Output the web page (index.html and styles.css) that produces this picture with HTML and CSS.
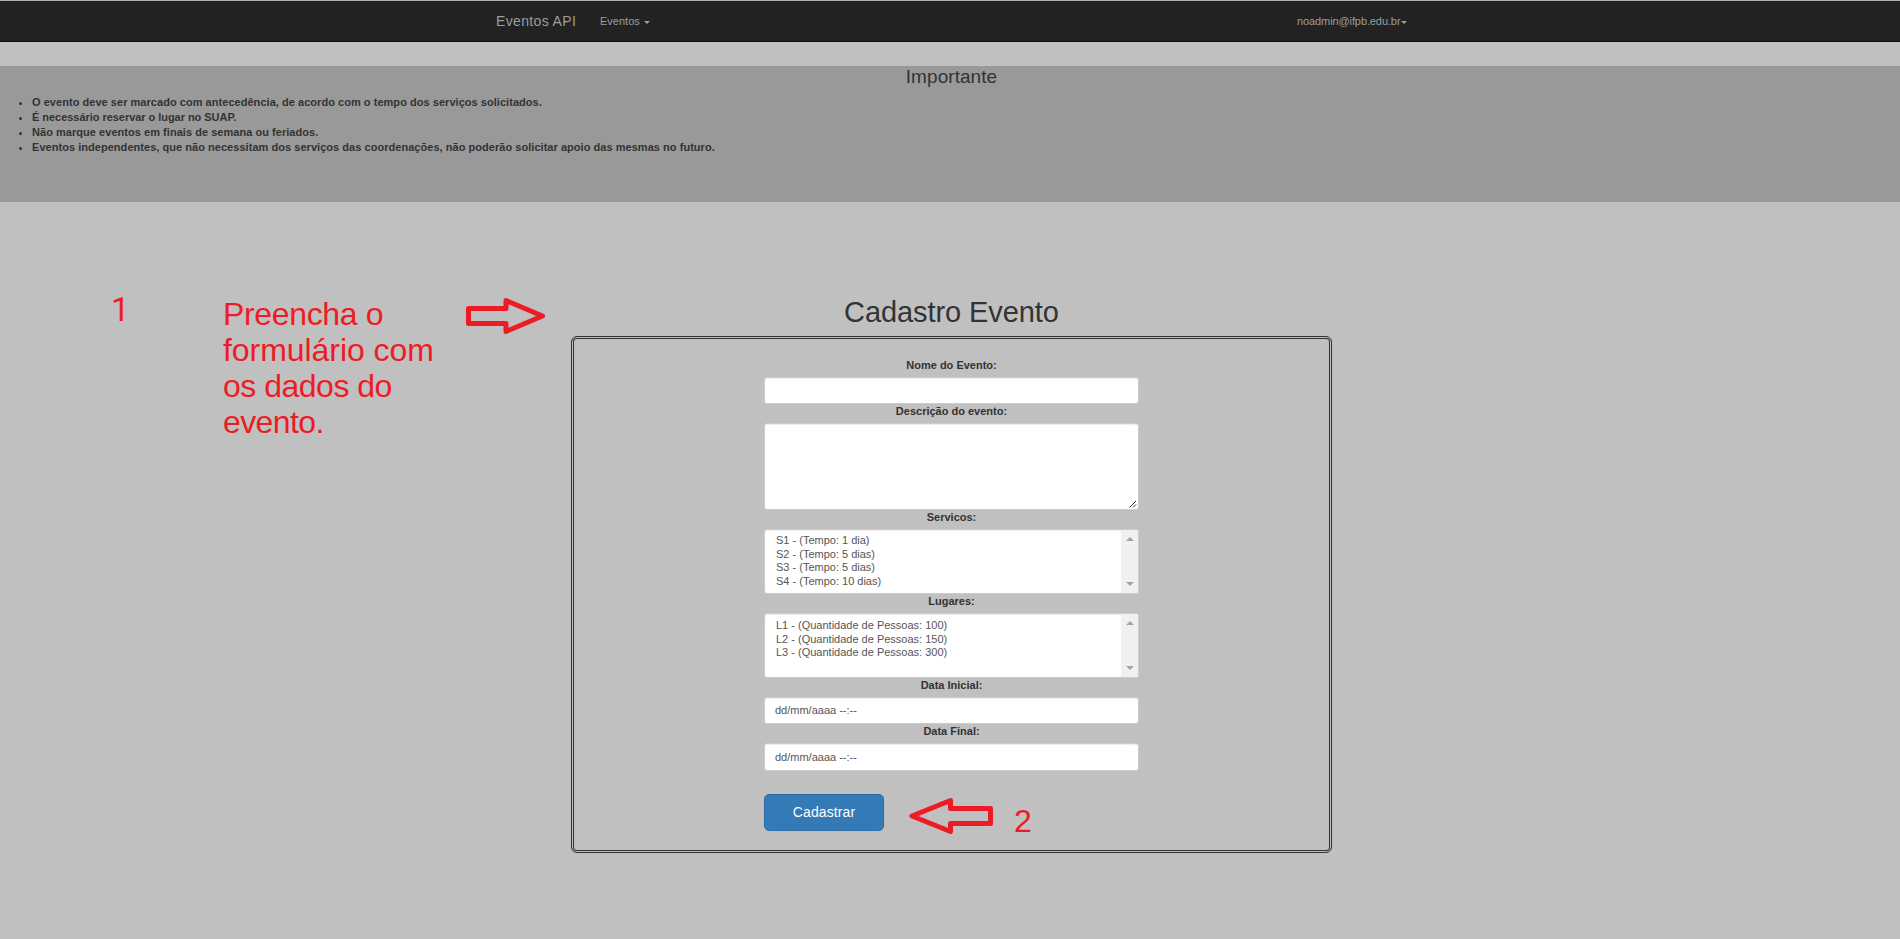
FILE: index.html
```html
<!DOCTYPE html>
<html lang="pt-BR">
<head>
<meta charset="utf-8">
<title>Eventos API</title>
<link rel="stylesheet" href="styles.css">
</head>
<body>
<nav class="navbar">
  <div class="navbar-inner">
    <a class="brand">Eventos API</a>
    <a class="nav-link">Eventos <span class="caret caret-gap"></span></a>
    <a class="nav-user"><span class="user-name">noadmin@ifpb.edu.br</span><span class="caret"></span></a>
  </div>
</nav>
<section class="notice">
  <h4 class="notice-title"><span>Importante</span></h4>
  <ul class="notice-list">
    <li><span class="n1">O evento deve ser marcado com antecedência, de acordo com o tempo dos serviços solicitados.</span></li>
    <li><span class="n2">É necessário reservar o lugar no SUAP.</span></li>
    <li><span class="n3">Não marque eventos em finais de semana ou feriados.</span></li>
    <li><span class="n4">Eventos independentes, que não necessitam dos serviços das coordenações, não poderão solicitar apoio das mesmas no futuro.</span></li>
  </ul>
</section>
<main class="content">
  <h2 class="title"><span>Cadastro Evento</span></h2>
  <form class="panel">
    <label class="label">Nome do Evento:</label>
    <input class="control" type="text">
    <label class="label">Descrição do evento:</label>
    <div class="area-wrap">
      <textarea class="control area"></textarea>
      <svg class="grip" width="8" height="8" viewBox="0 0 8 8"><path d="M0.5 7.5L7 1M4 7.5L7 4.5" stroke="#333" stroke-width="1" fill="none"/></svg>
    </div>
    <label class="label">Servicos:</label>
    <div class="control list">
      <ul class="options">
        <li>S1 - (Tempo: 1 dia)</li>
        <li>S2 - (Tempo: 5 dias)</li>
        <li>S3 - (Tempo: 5 dias)</li>
        <li>S4 - (Tempo: 10 dias)</li>
      </ul>
      <div class="scroll"><span class="up"></span><span class="down"></span></div>
    </div>
    <label class="label">Lugares:</label>
    <div class="control list">
      <ul class="options options-low">
        <li>L1 - (Quantidade de Pessoas: 100)</li>
        <li>L2 - (Quantidade de Pessoas: 150)</li>
        <li>L3 - (Quantidade de Pessoas: 300)</li>
      </ul>
      <div class="scroll"><span class="up"></span><span class="down"></span></div>
    </div>
    <label class="label">Data Inicial:</label>
    <div class="control date"><span>dd/mm/aaaa --:--</span></div>
    <label class="label">Data Final:</label>
    <div class="control date date-last"><span>dd/mm/aaaa --:--</span></div>
    <button class="submit" type="button">Cadastrar</button>
  </form>
</main>
<div class="note note-one">1</div>
<div class="note note-fill"><span class="f1">Preencha o</span><br><span class="f2">formulário com</span><br><span class="f3">os dados do</span><br><span class="f4">evento.</span></div>
<svg class="arrow arrow-right" width="82" height="40" viewBox="0 0 82 40"><path d="M3.500 11.500H41V3.500L77.500 19L41 34.500V26.500H3.500Z"/></svg>
<svg class="arrow arrow-left" width="88" height="40" viewBox="0 0 88 40"><path d="M83.500 11.500H43.500V3.500L5 19L43.500 34.500V26.500H83.500Z"/></svg>
<div class="note note-two">2</div>
</body>
</html>
```
FILE: styles.css
```css
* { box-sizing: border-box; }
body {
  margin: 0;
  height: 939px;
  overflow: hidden;
  position: relative;
  background: #c0c0c0;
  color: #333;
  font: 11px/15px "Liberation Sans", Arial, sans-serif;
}
.navbar {
  height: 42px;
  margin-bottom: 24px;
  background: #222;
  border-top: 1px solid #a9adab;
  border-bottom: 1px solid #080808;
}
.navbar-inner { display: flex; align-items: center; height: 40px; padding-left: 496px; color: #9d9d9d; }
.brand { font-size: 14px; width: 104px; letter-spacing: 0.35px; }
.nav-link { width: 697px; }
.nav-user { display: flex; align-items: center; letter-spacing: -0.1px; }
.caret {
  display: inline-block;
  border-top: 3px solid #9d9d9d;
  border-left: 3px solid transparent;
  border-right: 3px solid transparent;
  vertical-align: middle;
  margin: 2px 0 0 1px;
}
.caret-gap { margin: 1px 0 0 1px; }
.notice { height: 136px; background: #999; }
.notice-title { margin: 0; padding: 1px 0 0 3px; font-size: 19px; line-height: 20px; font-weight: 400; text-align: center; letter-spacing: 0.06px; }
.notice-list { margin: 8px 0 0; padding-left: 32px; font-weight: 700; font-size: 11px; letter-spacing: 0.04px; }
.n2 { letter-spacing: -0.04px; }
.content { padding-top: 93px; }
.title { margin: 0; height: 41px; font-size: 29px; line-height: 34px; font-weight: 400; text-align: center; padding-left: 3px; letter-spacing: -0.08px; }
.panel {
  display: flex;
  flex-direction: column;
  width: 761px;
  height: 517px;
  margin: 0 0 0 571px;
  padding: 21px 192px 0;
  border: 1px solid #333;
  border-radius: 6px;
  box-shadow: inset 0 0 0 1px #c0c0c0, inset 0 0 0 2px #333;
}
.label { width: 375px; height: 19px; font-weight: 700; text-align: center; flex: none; }
.control {
  display: block;
  width: 375px;
  height: 27px;
  flex: none;
  border: 1px solid #ccc;
  border-radius: 3px;
  background: #fff;
  color: #555;
  font: 11px/15px "Liberation Sans", Arial, sans-serif;
  box-shadow: inset 0 1px 1px rgba(0,0,0,.075);
}
.area-wrap { position: relative; height: 87px; width: 375px; }
.area { height: 87px; resize: none; }
.grip { position: absolute; right: 2px; bottom: 2px; }
.list { height: 65px; display: flex; justify-content: space-between; overflow: hidden; }
.options { list-style: none; margin: 0; padding: 4px 0 0 11px; line-height: 13.6px; }
.options-low { padding-top: 5px; }
.scroll { width: 17px; background: #f0f0f0; display: flex; flex-direction: column; justify-content: space-between; align-items: center; padding: 7px 0; }
.up, .down { border-left: 4px solid transparent; border-right: 4px solid transparent; }
.up { border-bottom: 4px solid #a3a3a3; }
.down { border-top: 4px solid #a3a3a3; }
.date { padding: 5px 0 0 10px; }
.date-last { height: 28px; padding-top: 6px; }
.submit {
  width: 120px;
  height: 37px;
  margin-top: 23px;
  border: 1px solid #2e6da4;
  border-radius: 5px;
  background: #337ab7;
  color: #fff;
  font: 14px "Liberation Sans", Arial, sans-serif;
  letter-spacing: 0.1px;
  padding: 0 0 2px;
}
.note { position: absolute; color: #ed1c24; font-size: 32px; line-height: 36px; white-space: nowrap; }
.note-one { left: 111px; top: 292px; font-size: 33px; font-family: Roboto, "Liberation Sans", sans-serif; }
.note-fill { left: 223px; top: 296px; }
.f1 { letter-spacing: -0.35px; }
.f2 { letter-spacing: -0.05px; }
.f3 { letter-spacing: -0.5px; }
.f4 { letter-spacing: -0.6px; }
.note-two { left: 1014px; top: 803px; }
.arrow { position: absolute; fill: none; stroke: #ed1c24; stroke-width: 5; stroke-linejoin: round; }
.arrow-right { left: 465px; top: 297px; }
.arrow-left { left: 907px; top: 797px; }
```
